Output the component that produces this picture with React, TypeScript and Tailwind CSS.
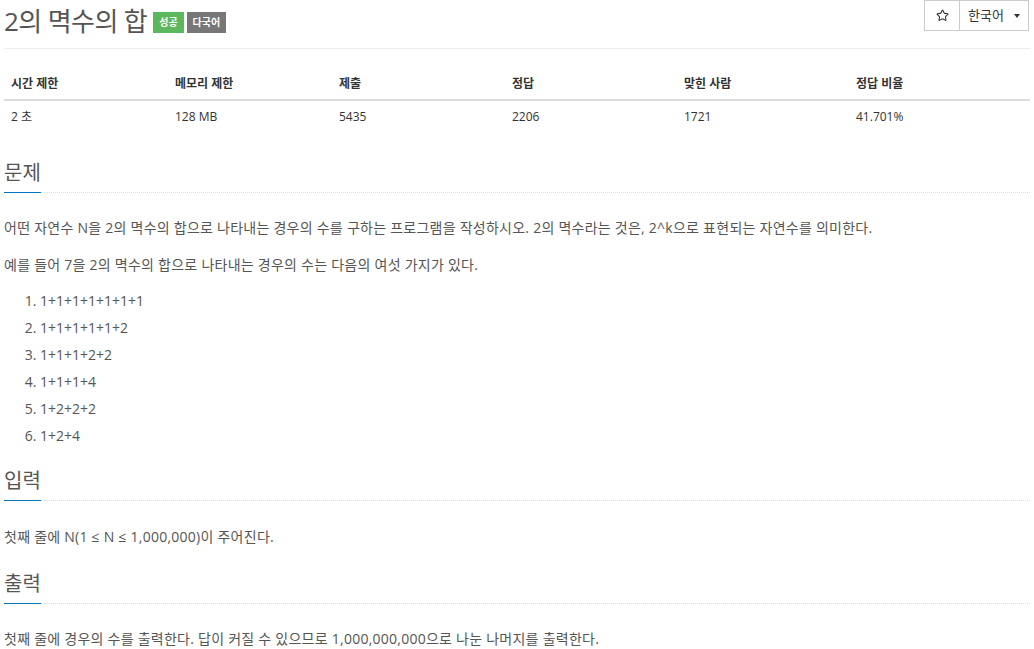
import { Star } from "lucide-react";

const font = {
  fontFamily: '"Open Sans", "Noto Sans CJK KR", sans-serif',
};

const stats = [
  { label: "시간 제한", value: "2 초" },
  { label: "메모리 제한", value: "128 MB" },
  { label: "제출", value: "5435" },
  { label: "정답", value: "2206" },
  { label: "맞힌 사람", value: "1721" },
  { label: "정답 비율", value: "41.701%" },
];

const cases = ["1+1+1+1+1+1+1", "1+1+1+1+1+2", "1+1+1+2+2", "1+1+1+4", "1+2+2+2", "1+2+4"];

function SectionTitle({ children }: { children: string }) {
  return (
    <div className="flex border-b border-dotted border-[#ddd]">
      <h2 className="-mb-px border-b border-[#0076c0] pb-[5px] text-[20px] leading-[28px] text-[#555]">
        {children}
      </h2>
    </div>
  );
}

export default function App() {
  return (
    <div className="min-h-screen bg-white px-[4px] text-[14px] text-[#555]" style={font}>
      <div className="flex items-start justify-between">
        <div className="flex items-center gap-[3px] pt-[2px]">
          <h1 className="mr-[3px] text-[26px] leading-[38px] tracking-[-0.6px] text-[#555]">2의 멱수의 합</h1>
          <span className="mt-[2px] bg-[#5cb85c] px-[6px] text-[10px] font-bold leading-[21px] text-white">
            성공
          </span>
          <span className="mt-[2px] bg-[#777] px-[6px] text-[10px] font-bold leading-[21px] text-white">
            다국어
          </span>
        </div>
        <div className="flex pr-[1px]">
          <button className="flex h-[31px] w-[36px] items-center justify-center border border-[#ccc] bg-white text-[#333]">
            <Star size={13} strokeWidth={2} />
          </button>
          <button className="-ml-px flex h-[31px] items-center gap-[10px] border border-[#ccc] bg-white pl-[8px] pr-[8px] text-[13px] text-[#333]">
            한국어
            <span className="h-0 w-0 border-x-[3.5px] border-t-[4px] border-x-transparent border-t-[#333]" />
          </button>
        </div>
      </div>

      <div className="mt-[8px] border-b border-[#eee]" />

      <div className="mt-[18px] grid grid-cols-[164px_164px_173px_172px_172px_1fr] text-[12px]">
        {stats.map((s) => (
          <div
            key={s.label}
            className="border-b-2 border-[#ddd] px-[7px] pb-[7px] pt-[8px] leading-[17px] font-bold text-[#333]"
          >
            {s.label}
          </div>
        ))}
        {stats.map((s) => (
          <div key={s.value} className="px-[7px] pb-[8px] pt-[7px] leading-[17px] text-[#333]">
            {s.value}
          </div>
        ))}
      </div>

      <div className="mt-[26px]">
        <SectionTitle>문제</SectionTitle>
        <div className="mt-[23px] leading-[24px] tracking-[0.25px]">
          <p>
            어떤 자연수 N을 2의 멱수의 합으로 나타내는 경우의 수를 구하는 프로그램을 작성하시오. 2의 멱수라는 것은,
            2^k으로 표현되는 자연수를 의미한다.
          </p>
          <p className="mt-[13px]">예를 들어 7을 2의 멱수의 합으로 나타내는 경우의 수는 다음의 여섯 가지가 있다.</p>
          <ol className="mt-[10px] list-decimal pl-[36px] tracking-normal">
            {cases.map((c) => (
              <li key={c} className="leading-[27px]">
                {c}
              </li>
            ))}
          </ol>
        </div>
      </div>

      <div className="mt-[18px]">
        <SectionTitle>입력</SectionTitle>
        <p className="mt-[24px] leading-[24px] tracking-[0.25px]">첫째 줄에 N(1 ≤ N ≤ 1,000,000)이 주어진다.</p>
      </div>

      <div className="mt-[21px]">
        <SectionTitle>출력</SectionTitle>
        <p className="mt-[23px] leading-[24px] tracking-[0.25px]">
          첫째 줄에 경우의 수를 출력한다. 답이 커질 수 있으므로 1,000,000,000으로 나눈 나머지를 출력한다.
        </p>
      </div>
    </div>
  );
}
